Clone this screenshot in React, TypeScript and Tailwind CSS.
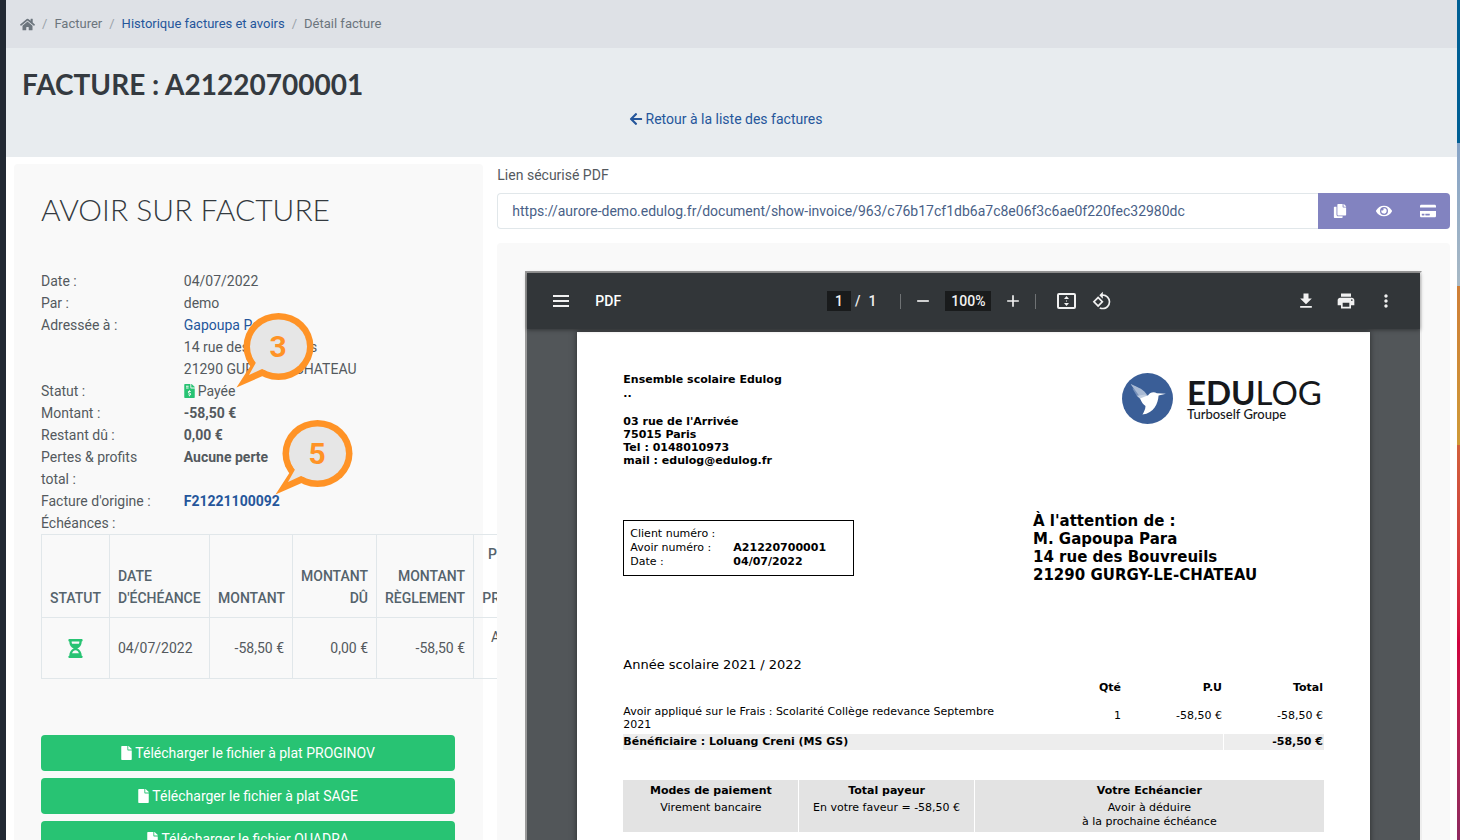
import {
  FaArrowLeft,
  FaCopy,
  FaCreditCard,
  FaEye,
  FaFile,
  FaFileInvoiceDollar,
  FaHome,
  FaHourglassHalf,
} from "react-icons/fa";
import {
  MdAdd,
  MdFileDownload,
  MdMoreVert,
  MdPrint,
  MdRemove,
  MdRotate90DegreesCcw,
} from "react-icons/md";

const Breadcrumb = () => (
  <nav aria-label="Fil d'Ariane" className="flex h-12 items-center bg-[#dee1e6] px-[14px] text-[13px] text-[#6c757d]">
    <a href="#accueil" aria-label="Accueil"><FaHome size={15}/></a>
    <span className="px-[7px] text-[#9aa2a9]">/</span>
    <span>Facturer</span>
    <span className="px-[7px] text-[#9aa2a9]">/</span>
    <a href="#historique" className="text-[#25569b]">Historique factures et avoirs</a>
    <span className="px-[7px] text-[#9aa2a9]">/</span>
    <span>Détail facture</span>
  </nav>
)

const Callout = ({value, className}: { value: string, className: string }) => (
  <svg viewBox="0 0 80 76" className={`absolute h-[76px] w-[80px] ${className}`}>
    <g fill="#ff9326">
      <ellipse cx="44.5" cy="34.5" rx="35" ry="33.5"/>
      <path d="M13 46 17 53 2.5 75.500 31 63 40 50Z"/>
    </g>
    <g fill="#e6e6e6">
      <ellipse cx="44.5" cy="34.5" rx="28.500" ry="27"/>
      <path d="M18 44 22 50.500 15 63 28 57 38 60 38 44Z"/>
    </g>
    <text x="44" y="45" textAnchor="middle" fill="#ff9326" className="text-[30px] font-bold">{value}</text>
  </svg>
)

const DETAILS = [
  {label: "Date :", value: "04/07/2022"},
  {label: "Par :", value: "demo"},
  {
    label: "Adressée à :",
    value: <>
      <a href="#client" className="text-[#25569b]">Gapoupa Para</a><br/>
      14 rue des Bouvreuils<br/>
      21290 GURGY-LE-CHATEAU
    </>
  },
  {
    label: "Statut :",
    value: <span className="flex items-center gap-[3px]">
      <FaFileInvoiceDollar className="h-[14px] w-[11px] text-[#28c373]"/>Payée
    </span>
  },
  {label: "Montant :", value: <b>-58,50 €</b>},
  {label: "Restant dû :", value: <b>0,00 €</b>},
  {label: "Pertes & profits total :", value: <b>Aucune perte</b>},
  {label: "Facture d'origine :", value: <a href="#origine" className="font-bold text-[#25569b]">F21221100092</a>},
  {label: "Échéances :", value: ""},
]

const DOWNLOADS = [
  "Télécharger le fichier à plat PROGINOV",
  "Télécharger le fichier à plat SAGE",
  "Télécharger le fichier QUADRA",
]

const cell = "border border-[#e1e7ea] p-2"

const DueTable = () => (
  <table className="w-[505px] table-fixed border-collapse">
    <colgroup>
      <col className="w-[68px]"/>
      <col className="w-[100px]"/>
      <col className="w-[83px]"/>
      <col className="w-[84px]"/>
      <col className="w-[97px]"/>
      <col className="w-[73px]"/>
    </colgroup>
    <thead>
      <tr className="align-bottom text-[#55636c]">
        <th className={`${cell} text-center font-medium`}>STATUT</th>
        <th className={`${cell} text-left font-medium`}>DATE D'ÉCHÉANCE</th>
        <th className={`${cell} text-right font-medium`}>MONTANT</th>
        <th className={`${cell} text-right font-medium`}>MONTANT DÛ</th>
        <th className={`${cell} text-right font-medium`}>MONTANT RÈGLEMENT</th>
        <th className={`${cell} text-right font-medium`}>PERTES<br/>&amp;<br/>PROFITS</th>
      </tr>
    </thead>
    <tbody>
      <tr>
        <td className={cell}><FaHourglassHalf size={19} className="mx-auto text-[#28c373]"/></td>
        <td className={cell}>04/07/2022</td>
        <td className={`${cell} text-right`}>-58,50 €</td>
        <td className={`${cell} text-right`}>0,00 €</td>
        <td className={`${cell} text-right`}>-58,50 €</td>
        <td className={`${cell} text-right`}>Aucune perte</td>
      </tr>
    </tbody>
  </table>
)

const InvoiceCard = () => (
  <section className="relative rounded bg-[#f9f9f9] py-[27px] pl-[27px] pr-7">
    <h2 className="mb-[43px] whitespace-nowrap font-['Lato'] text-[30px] font-light leading-[36px] text-[#343a40]">
      AVOIR SUR FACTURE
    </h2>
    <dl>
      {DETAILS.map((item) => (
        <div key={item.label} className="grid grid-cols-3 gap-x-[14px]">
          <dt className="pr-3">{item.label}</dt>
          <dd className="col-span-2">{item.value}</dd>
        </div>
      ))}
    </dl>
    <DueTable/>
    <div className="mt-14 flex flex-col gap-[7px]">
      {DOWNLOADS.map((label) => (
        <button key={label} className="flex h-9 items-center justify-center gap-[3px] rounded bg-[#28c373] text-white">
          <FaFile className="h-[14px] w-[11px]"/>{label}
        </button>
      ))}
    </div>
    <Callout value="3" className="left-[220px] top-[148px]"/>
    <Callout value="5" className="left-[259px] top-[255px]"/>
  </section>
)

const SecureLink = () => (
  <div>
    <label htmlFor="pdf-link" className="mb-[7px] block">Lien sécurisé PDF</label>
    <div className="flex h-9">
      <input
        id="pdf-link"
        readOnly
        className="min-w-0 flex-1 rounded-l border border-r-0 border-[#e1e7ea] bg-white px-[14px] text-[#495f87] outline-none"
        value="https://aurore-demo.edulog.fr/document/show-invoice/963/c76b17cf1db6a7c8e06f3c6ae0f220fec32980dc"
      />
      <div className="flex w-[132px] rounded-r bg-[#8283c0] text-white">
        <button aria-label="Copier" className="grid flex-1 place-items-center"><FaCopy size={14}/></button>
        <button aria-label="Voir" className="grid flex-1 place-items-center"><FaEye size={16}/></button>
        <button aria-label="Payer" className="grid flex-1 place-items-center"><FaCreditCard size={16}/></button>
      </div>
    </div>
  </div>
)

const toolButton = "grid size-6 place-items-center"

const PdfToolbar = () => (
  <div className="relative flex h-14 items-center bg-[#323639] px-[22px] font-medium text-[#f1f1f1] shadow-[0_1px_4px_rgba(0,0,0,0.4)]">
    <div className="flex flex-1 items-center gap-[22px]">
      <button aria-label="Menu" className={toolButton}>
        <svg width="16" height="12" fill="currentColor"><path d="M0 0h16v2H0zM0 5h16v2H0zM0 10h16v2H0z"/></svg>
      </button>
      <span className="text-white">PDF</span>
    </div>
    <div className="flex items-center gap-[10px] pr-1.5">
      <div className="flex items-center gap-1 pr-[14px]">
        <input aria-label="Page" readOnly value="1" className="h-5 w-6 bg-[#191b1c] text-center outline-none"/>
        <span>/</span>
        <span className="pl-1">1</span>
      </div>
      <span className="h-[15px] w-px bg-[#6f7274]"/>
      <button aria-label="Zoom arrière" className={toolButton}><MdRemove size={20}/></button>
      <input aria-label="Zoom" readOnly value="100%" className="h-5 w-[46px] bg-[#191b1c] text-center outline-none"/>
      <button aria-label="Zoom avant" className={toolButton}><MdAdd size={20}/></button>
      <span className="h-[15px] w-px bg-[#6f7274]"/>
      <div className="flex gap-3 pl-2">
        <button aria-label="Ajuster à la page" className={toolButton}>
          <svg width="19" height="16" viewBox="0 0 19 16" fill="currentColor">
            <rect x="1" y="1" width="17" height="14" rx="1" fill="none" stroke="currentColor" strokeWidth="2"/>
            <path d="M9.500 3 12 6H7zM9.500 13 12 10H7zM9 7.500h1v1H9z"/>
          </svg>
        </button>
        <button aria-label="Pivoter" className={toolButton}><MdRotate90DegreesCcw size={20}/></button>
      </div>
    </div>
    <div className="flex flex-1 items-center justify-end gap-4">
      <button aria-label="Télécharger" className={toolButton}><MdFileDownload size={20}/></button>
      <button aria-label="Imprimer" className={toolButton}><MdPrint size={20}/></button>
      <button aria-label="Plus" className={toolButton}><MdMoreVert size={20}/></button>
    </div>
  </div>
)

const Logo = () => (
  <div className="flex items-center gap-[14px] self-start font-['Lato'] text-[#16181b]">
    <svg viewBox="0 0 152 152" className="size-[51px]">
      <circle cx="76" cy="76" r="76" fill="#3a5e97"/>
      <path d="M26 33 48 45 44 62Z" fill="#8099c0"/>
      <path d="M31 46 60 50 62 80 44 68Z" fill="#7690ba"/>
      <path d="M26 33C46 43 66 48 76 68L64 86Z" fill="#a9bad4"/>
      <path d="M44 68 70 64 76 84 66 88Z" fill="#c3cfe1"/>
      <path d="M54 76 78 66C83 58 94 54 104 60L131 62 109 67C107 92 96 119 61 124 65 116 70 108 70 98 64 95 58 87 54 76Z" fill="#fff"/>
    </svg>
    <div className="w-[137px]">
      <div className="text-[33px] leading-[30px]"><b>EDU</b>LOG</div>
      <div className="text-[13px] font-medium leading-[14px]">Turboself Groupe</div>
    </div>
  </div>
)

const LinesTable = () => (
  <table className="mt-[5px] w-full table-fixed border-separate border-spacing-0 text-right">
    <colgroup>
      <col/>
      <col className="w-[101px]"/>
      <col className="w-[101px]"/>
      <col className="w-[101px]"/>
    </colgroup>
    <thead>
      <tr className="h-[18px]">
        <th/>
        <th className="pr-px">Qté</th>
        <th className="pr-px">P.U</th>
        <th className="pr-px">Total</th>
      </tr>
    </thead>
    <tbody>
      <tr className="leading-[13px]">
        <td className="pb-[3px] pt-2 text-left">Avoir appliqué sur le Frais : Scolarité Collège redevance Septembre 2021</td>
        <td className="pr-px">1</td>
        <td className="pr-px">-58,50 €</td>
        <td className="pr-px">-58,50 €</td>
      </tr>
      <tr className="h-4 bg-[#ededed] font-bold">
        <td colSpan={3} className="text-left">Bénéficiaire : Loluang Creni (MS GS)</td>
        <td className="border-l border-white pr-px">-58,50 €</td>
      </tr>
    </tbody>
  </table>
)

const PaymentTable = () => (
  <table className="mt-[30px] w-full table-fixed border-separate border-spacing-0 bg-[#e3e3e3] text-center">
    <colgroup>
      <col className="w-1/4"/>
      <col className="w-1/4"/>
      <col className="w-1/2"/>
    </colgroup>
    <thead>
      <tr>
        <th className="pb-[3px] pt-1">Modes de paiement</th>
        <th className="border-l border-white pb-[3px] pt-1">Total payeur</th>
        <th className="border-l border-white pb-[3px] pt-1">Votre Echéancier</th>
      </tr>
    </thead>
    <tbody>
      <tr className="align-top">
        <td>Virement bancaire</td>
        <td className="border-l border-white">En votre faveur = -58,50 €</td>
        <td className="border-l border-white pb-[3px]">Avoir à déduire<br/>à la prochaine échéance</td>
      </tr>
    </tbody>
  </table>
)

const PdfPage = () => (
  <div className="mx-[50px] mt-[3px] min-h-[1123px] bg-white px-[46px] pt-[41px] font-['DejaVu_Sans'] text-[11px] leading-[14px] text-black shadow-[0_0_6px_rgba(0,0,0,0.5)]">
    <div className="flex justify-between">
      <div className="font-bold">
        <p>Ensemble scolaire Edulog</p>
        <p className="mb-[14px]">..</p>
        <p className="leading-[13px]">
          03 rue de l'Arrivée<br/>
          75015 Paris<br/>
          Tel : 0148010973<br/>
          mail : edulog@edulog.fr
        </p>
      </div>
      <Logo/>
    </div>
    <div className="mt-[45px] flex items-center justify-between">
      <dl className="grid w-[231px] grid-cols-[103px_1fr] border border-black p-[6px]">
        <dt>Client numéro :</dt>
        <dd/>
        <dt>Avoir numéro :</dt>
        <dd className="font-bold">A21220700001</dd>
        <dt>Date :</dt>
        <dd className="font-bold">04/07/2022</dd>
      </dl>
      <p className="w-[291px] text-[15px] font-bold leading-[18px]">
        À l'attention de :<br/>
        M. Gapoupa Para<br/>
        14 rue des Bouvreuils<br/>
        21290 GURGY-LE-CHATEAU
      </p>
    </div>
    <p className="mt-[72px] text-[13px] leading-[18px]">Année scolaire 2021 / 2022</p>
    <LinesTable/>
    <PaymentTable/>
  </div>
)

export default function App() {
  return (
    <div className="flex h-screen overflow-hidden bg-white font-['Roboto',sans-serif] text-[14px] leading-[22px] text-[#54595e]">
      <div className="w-1.5 shrink-0 bg-[#222933]"/>
      <main className="min-w-0 flex-1">
        <Breadcrumb/>
        <header className="bg-[#e8ecef] pb-[27px] pl-4 pr-7 pt-[18px]">
          <h1 className="font-['Lato'] text-[28px] font-bold leading-[36px] text-[#343a40]">FACTURE : A21220700001</h1>
          <a href="#liste" className="mt-1.5 flex items-center justify-center gap-[3px] text-[#25569b]">
            <FaArrowLeft size={14}/>Retour à la liste des factures
          </a>
        </header>
        <div className="grid grid-cols-3 gap-[14px] pl-2 pr-[7px] pt-[7px]">
          <InvoiceCard/>
          <div className="col-span-2">
            <SecureLink/>
            <section className="relative z-10 mt-[14px] rounded bg-[#f9f9f9] p-7">
              <div className="border-2 border-b-[#eee] border-l-[#9a9a9a] border-r-[#eee] border-t-[#9a9a9a] bg-[#525659]">
                <PdfToolbar/>
                <PdfPage/>
              </div>
            </section>
          </div>
        </div>
      </main>
      <div className="flex w-[3px] shrink-0 flex-col">
        <div className="h-[17%] bg-[#005f94]"/>
        <div className="h-[17%] bg-linear-to-b from-[#86a3c6] to-[#a9bac6]"/>
        <div className="h-[19%] bg-linear-to-b from-[#cf7f38] to-[#cf9a38]"/>
        <div className="flex-1 bg-linear-to-b from-[#d2603c] via-[#d0003f] to-[#8f2a60]"/>
      </div>
    </div>
  )
}
